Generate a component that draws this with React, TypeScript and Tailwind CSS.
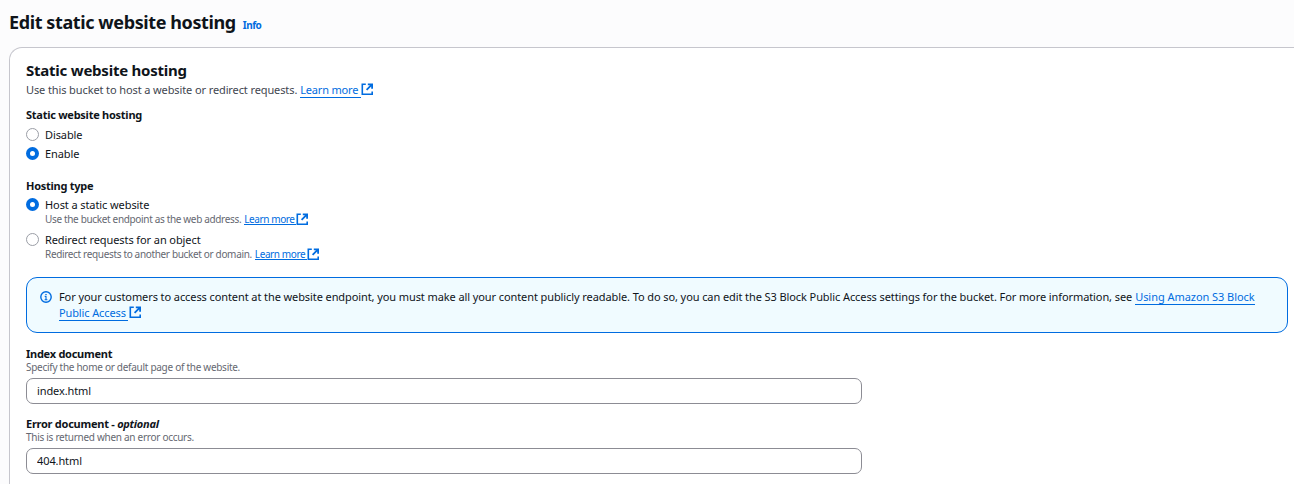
import React from "react";

function ExternalIcon({ className = "" }: { className?: string }) {
  return (
    <svg className={`inline-block h-3 w-3 shrink-0 ${className}`} viewBox="0 0 12 12" fill="none" stroke="#006ce0" strokeWidth="1.6">
      <path d="M4.8 1.3H1.3v9.9h9.9V8.4" />
      <path d="M6.8 1.4H11.1v4.3M10.8 1.7 5.6 6.9" strokeWidth="1.8" />
    </svg>
  );
}

function Link({ children, className = "" }: { children: React.ReactNode; className?: string }) {
  return <a className={`border-b border-[#006ce0] text-[#006ce0] ${className}`}>{children}</a>;
}

function Radio({ checked = false }: { checked?: boolean }) {
  return checked ? (
    <span className="mb-px flex size-[13px] shrink-0 items-center justify-center rounded-full bg-[#006ce0]">
      <span className="size-[5px] rounded-full bg-white" />
    </span>
  ) : (
    <span className="mb-px size-[13px] shrink-0 rounded-full border border-[#9b9ea6] bg-white" />
  );
}

function Option({ label, checked }: { label: string; checked?: boolean }) {
  return (
    <label className="flex h-4 items-center gap-[6px] leading-4">
      <Radio checked={checked} />
      <span className="tracking-[-0.09px]">{label}</span>
    </label>
  );
}

function Hint({ text }: { text: string }) {
  return (
    <div className="flex h-3 items-center pl-[19px] text-[10px] leading-3 tracking-[-0.34px] text-[#656871]">
      <span>{text}</span>
      <Link className="ml-[3px] h-3 w-[52px] leading-3 tracking-[-0.4px]">Learn more</Link>
      <ExternalIcon />
    </div>
  );
}

function Field({ label, hint, value, className = "" }: { label: React.ReactNode; hint: string; value: string; className?: string }) {
  return (
    <div className={`flex w-[836px] flex-col ${className}`}>
      <label className="h-4 font-bold leading-4 tracking-[-0.26px]">{label}</label>
      <span className="-mt-px h-3 text-[10px] leading-3 tracking-[-0.28px] text-[#656871]">{hint}</span>
      <input
        className="mt-[5px] h-[26px] rounded-[7px] border border-[#8c8c94] bg-white px-[10px] pb-[2px] tracking-[-0.1px] outline-none"
        defaultValue={value}
      />
    </div>
  );
}

export default function App() {
  return (
    <div className="h-[484px] w-full overflow-hidden bg-[#fcfcfd] font-['Noto_Sans',sans-serif] text-[11px] text-[#0f141a]">
      <header className="flex h-[47px] items-start pl-[9px] pt-[10px]">
        <h1 className="text-[18px] font-bold leading-6 tracking-[-0.4px]">Edit static website hosting</h1>
        <a className="ml-[7px] mt-[7px] text-[10px] font-bold leading-4 tracking-[-0.5px] text-[#006ce0]">Info</a>
      </header>
      <main className="ml-[9px] h-[460px] rounded-tl-[13px] border-l border-t border-[#c6c6cd] bg-white pl-4 pr-[6px] pt-[12px]">
        <h2 className="h-5 text-[15px] font-bold leading-5 tracking-[-0.23px]">Static website hosting</h2>
        <div className="mt-[2px] flex h-4 items-center leading-4 text-[#424650]">
          <span className="tracking-[-0.11px]">Use this bucket to host a website or redirect requests.</span>
          <Link className="ml-[3px] h-4 w-[60.5px] leading-4 tracking-[-0.18px]">Learn more</Link>
          <ExternalIcon className="mb-[2px]" />
        </div>

        <h3 className="mt-[9px] h-4 font-bold leading-4 tracking-[-0.26px]">Static website hosting</h3>
        <div className="mt-1 flex flex-col gap-[3px]">
          <Option label="Disable" />
          <Option label="Enable" checked />
        </div>

        <h3 className="mt-4 h-4 font-bold leading-4 tracking-[-0.26px]">Hosting type</h3>
        <div className="mt-[3px]">
          <Option label="Host a static website" checked />
          <Hint text="Use the bucket endpoint as the web address." />
        </div>
        <div className="mt-[7px]">
          <Option label="Redirect requests for an object" />
          <Hint text="Redirect requests to another bucket or domain." />
        </div>

        <section className="mt-[17px] flex h-[56px] rounded-[11px] border border-[#006ce0] bg-[#f0fbff] pl-[13px] pt-[11px]">
          <svg className="mt-[2px] size-3 shrink-0" viewBox="0 0 12 12" fill="none" stroke="#006ce0" strokeWidth="1.4">
            <circle cx="6" cy="6" r="5.2" />
            <path d="M4.7 5.4H6V9M4.6 8.8h2.8M5.3 3.5h1.4" strokeWidth="1.1" />
          </svg>
          <div className="ml-[7px] flex flex-col leading-4">
            <div className="flex h-4 whitespace-nowrap">
              <span className="tracking-[-0.092px]">
                For your customers to access content at the website endpoint, you must make all your content publicly readable. To do so, you can edit the S3 Block Public Access settings for the bucket. For more information, see
              </span>
              <Link className="ml-[3px] h-4 tracking-[-0.05px]">Using Amazon S3 Block</Link>
            </div>
            <div className="flex h-4">
              <Link className="h-4 w-[69px] tracking-[-0.12px]">Public Access</Link>
              <ExternalIcon className="ml-px mt-px" />
            </div>
          </div>
        </section>

        <Field className="mt-[13px]" label="Index document" hint="Specify the home or default page of the website." value="index.html" />
        <Field
          className="mt-3"
          label={<>Error document - <i>optional</i></>}
          hint="This is returned when an error occurs."
          value="404.html"
        />
      </main>
    </div>
  );
}
